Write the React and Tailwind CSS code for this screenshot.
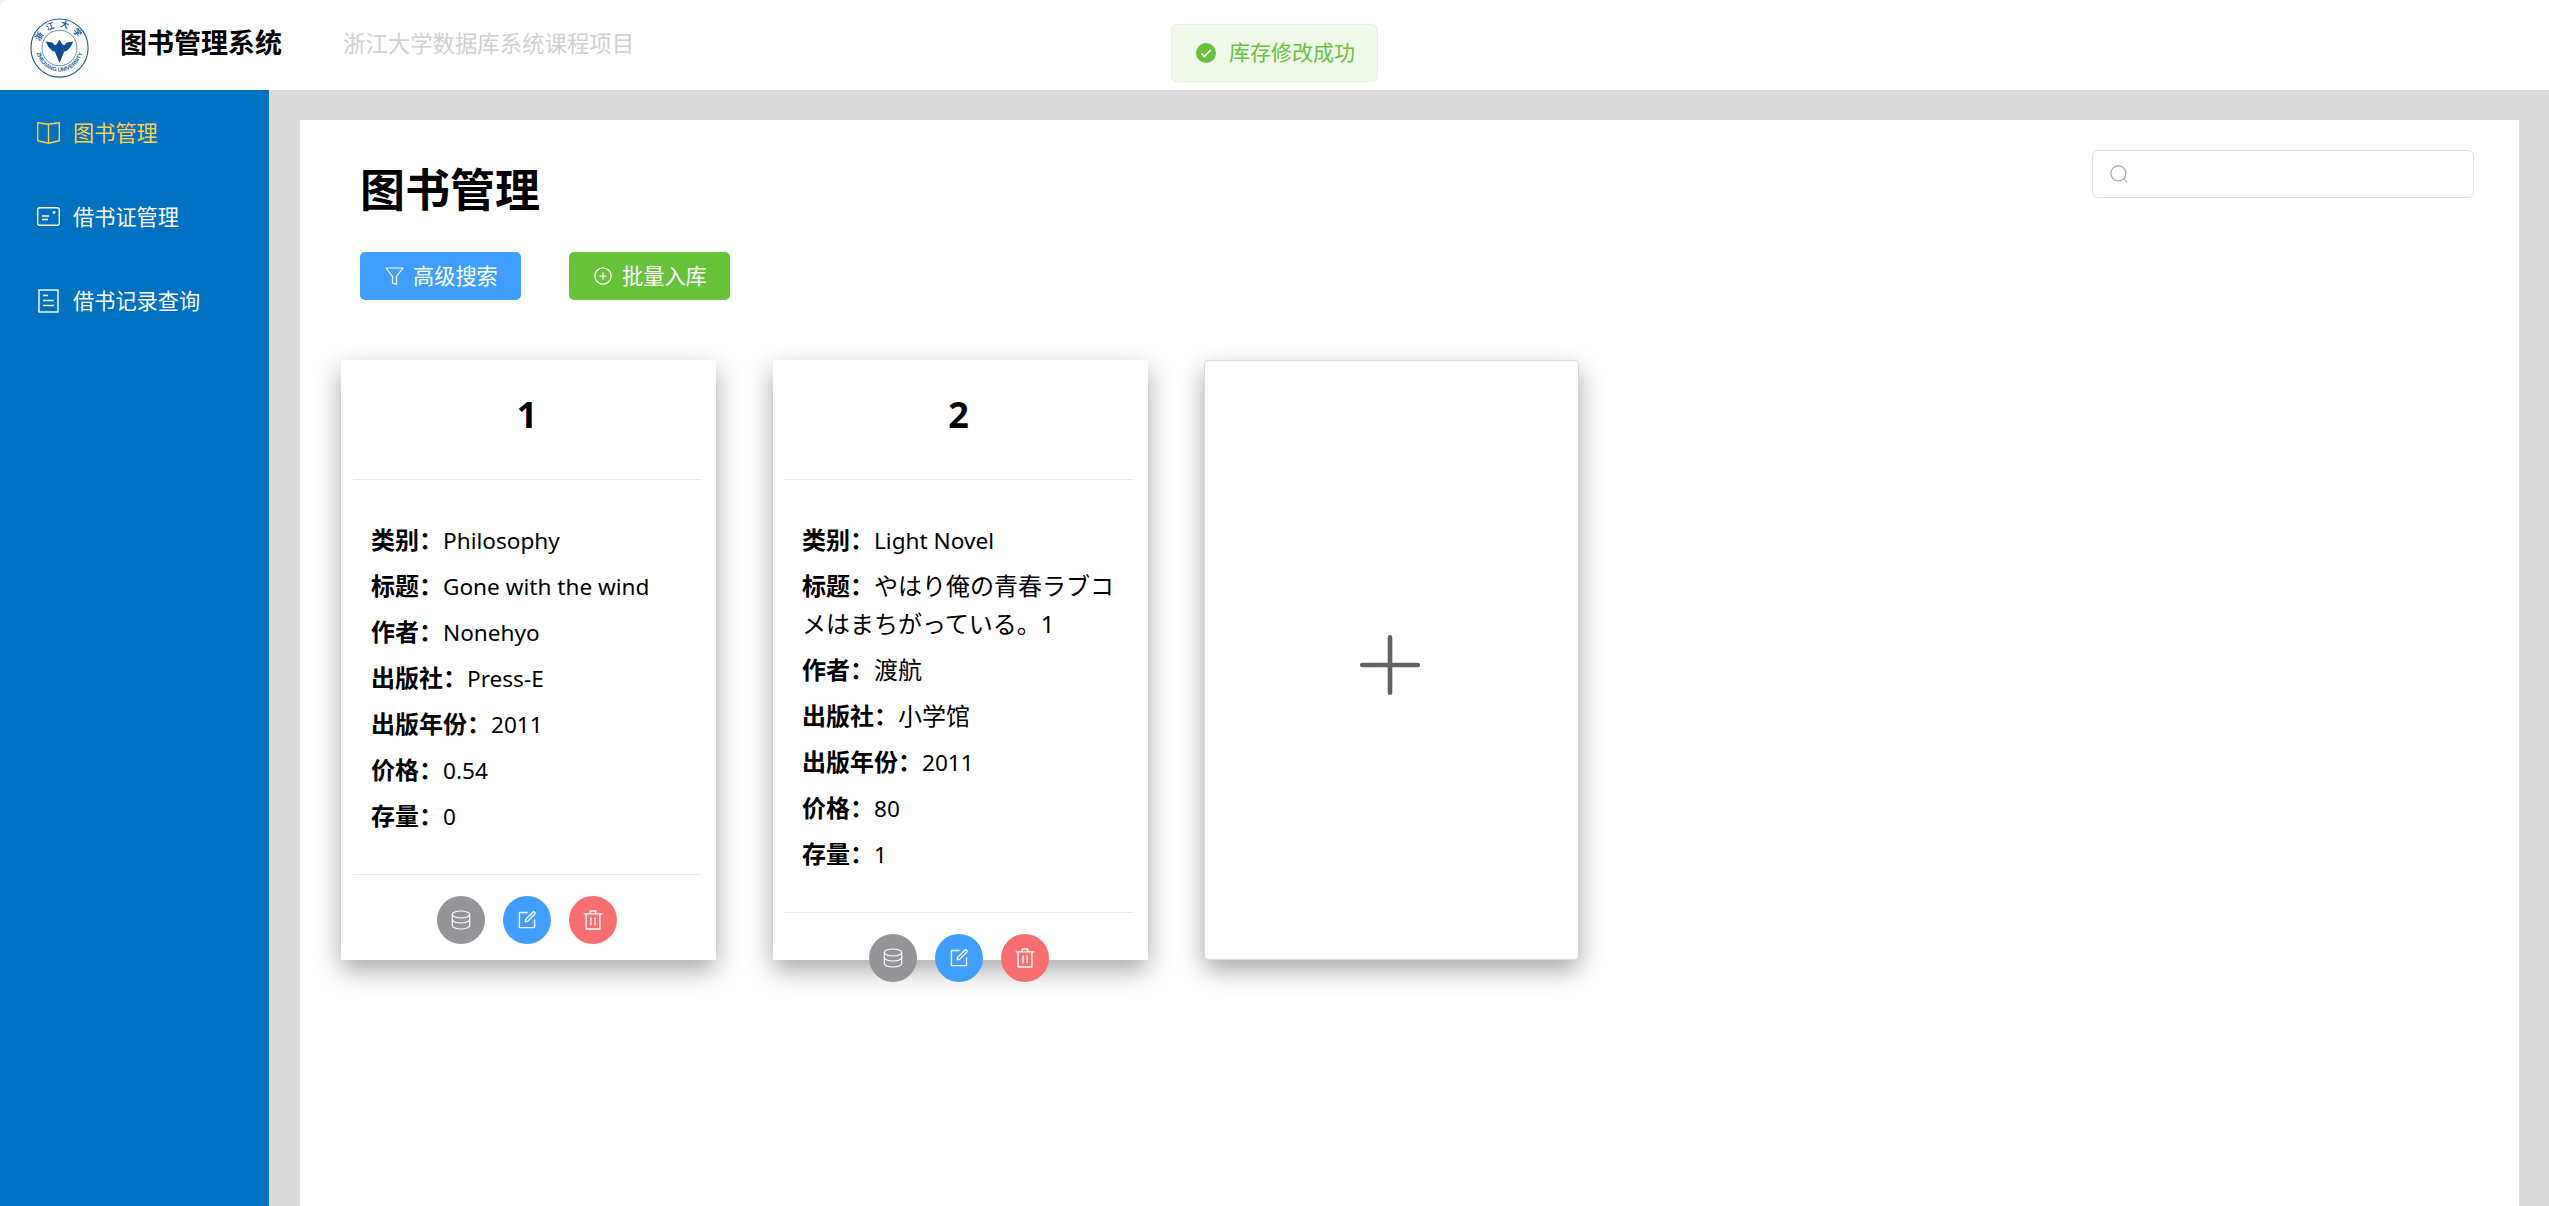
import React from "react";

const sans = "font-['Noto_Sans','Noto_Sans_CJK_SC',sans-serif]";

const Logo = () => (
  <svg viewBox="0 0 64 64" preserveAspectRatio="none" className="w-[59px] h-[60px] mt-[5px]">
    <defs>
      <path id="logoTop" d="M10 32a22 22 0 0 1 44 0" />
      <path id="logoBottom" d="M7 32a25 25 0 0 0 50 0" />
    </defs>
    <circle cx="32" cy="32" r="31" fill="#fff" stroke="#1b5a9c" strokeWidth="1.2" />
    <circle cx="32" cy="32" r="19" fill="none" stroke="#1b5a9c" strokeWidth="0.7" />
    <text fontSize="9" fontWeight="700" fill="#1b5a9c" fontFamily="Noto Sans CJK SC, sans-serif">
      <textPath href="#logoTop" startOffset="50%" textAnchor="middle" letterSpacing="5">浙江大学</textPath>
    </text>
    <text fontSize="6" fontWeight="700" fill="#1b5a9c" fontFamily="Liberation Sans, sans-serif">
      <textPath href="#logoBottom" startOffset="50%" textAnchor="middle">ZHEJIANG UNIVERSITY</textPath>
    </text>
    <path d="M17 25l7 1 3 3 2-1 3-5 3 5 2 1 3-3 7-1-3 6-4 4-3 1-5 12-5-12-3-1-4-4z" fill="#0f4c92" />
  </svg>
);

const BookIcon = () => (
  <svg viewBox="0 0 24 24" className="w-6 h-6" fill="none" stroke="currentColor" strokeWidth="1.4" strokeLinejoin="round">
    <path d="M12.500 3.200 1.700 1.800v18l10.800 2.400 10.800-2.400v-18z" />
    <path d="M12.500 3.200v19" />
  </svg>
);

const CardIcon = () => (
  <svg viewBox="0 0 24 24" className="w-6 h-6" fill="none" stroke="currentColor" strokeWidth="1.4">
    <rect x="1.700" y="2.700" width="21.600" height="17.600" rx="2" />
    <path d="M6 11h7M6 14.500h6" />
    <circle cx="18" cy="7.500" r="1.400" fill="currentColor" stroke="none" />
  </svg>
);

const DocIcon = () => (
  <svg viewBox="0 0 24 24" className="w-6 h-6" fill="none" stroke="currentColor" strokeWidth="1.4">
    <rect x="3" y="1" width="19" height="22" />
    <path d="M7 6.500h5M7 11.500h11M7 16.500h11" />
  </svg>
);

const FilterIcon = () => (
  <svg viewBox="0 0 20 20" className="w-5 h-5" fill="none" stroke="currentColor" strokeWidth="1.200" strokeLinejoin="round">
    <path d="M2 2h17l-6.500 8.500v8l-4 -1.500v-6.500z" />
  </svg>
);

const CirclePlusIcon = () => (
  <svg viewBox="0 0 1024 1024" className="w-5 h-5" fill="currentColor">
    <path d="M352 480h320a32 32 0 1 1 0 64H352a32 32 0 0 1 0-64z" />
    <path d="M480 672V352a32 32 0 1 1 64 0v320a32 32 0 0 1-64 0z" />
    <path d="M512 896a384 384 0 1 0 0-768 384 384 0 0 0 0 768zm0 64a448 448 0 1 1 0-896 448 448 0 0 1 0 896z" />
  </svg>
);

const CoinIcon = () => (
  <svg viewBox="0 0 24 24" className="w-[22px] h-[22px]" fill="none" stroke="currentColor" strokeWidth="1.200">
    <ellipse cx="12" cy="6" rx="9.500" ry="3.800" />
    <path d="M2.500 6v5.500c0 2.100 4.300 3.800 9.500 3.800s9.500-1.700 9.500-3.800V6" />
    <path d="M2.500 11.500v6.500c0 2.100 4.300 3.800 9.500 3.800s9.500-1.700 9.500-3.800v-6.500" />
  </svg>
);

const EditIcon = () => (
  <svg viewBox="0 0 1024 1024" className="w-[22px] h-[22px]" fill="currentColor">
    <path d="M832 512a32 32 0 1 1 64 0v352a32 32 0 0 1-32 32H160a32 32 0 0 1-32-32V160a32 32 0 0 1 32-32h352a32 32 0 0 1 0 64H192v640h640z" />
    <path d="m469.952 554.24 52.8-7.552L847.104 222.4a32 32 0 1 0-45.248-45.248L477.44 501.44l-7.552 52.8zm422.4-422.4a96 96 0 0 1 0 135.808l-331.84 331.84a32 32 0 0 1-18.112 9.088L436.8 623.68a32 32 0 0 1-36.224-36.224l15.104-105.6a32 32 0 0 1 9.024-18.112l331.904-331.84a96 96 0 0 1 135.744 0z" />
  </svg>
);

const DeleteIcon = () => (
  <svg viewBox="0 0 1024 1024" className="w-[22px] h-[22px]" fill="currentColor">
    <path d="M160 256H96a32 32 0 0 1 0-64h256V95.936a32 32 0 0 1 32-32h256a32 32 0 0 1 32 32V192h256a32 32 0 1 1 0 64h-64v672a32 32 0 0 1-32 32H192a32 32 0 0 1-32-32V256zm448-64v-64H416v64h192zM224 896h576V256H224v640zm192-128a32 32 0 0 1-32-32V416a32 32 0 0 1 64 0v320a32 32 0 0 1-32 32zm192 0a32 32 0 0 1-32-32V416a32 32 0 0 1 64 0v320a32 32 0 0 1-32 32z" />
  </svg>
);

const SearchIcon = () => (
  <svg viewBox="0 0 1024 1024" className="w-5 h-5 text-[#a8abb2]" fill="currentColor">
    <path d="m795.904 750.72 124.992 124.928a32 32 0 0 1-45.248 45.248L750.656 795.904a416 416 0 1 1 45.248-45.248zM480 832a352 352 0 1 0 0-704 352 352 0 0 0 0 704z" />
  </svg>
);

const PlusIcon = () => (
  <svg viewBox="0 0 1024 1024" className="w-[74px] h-[74px] text-[#606266]" fill="currentColor">
    <path d="M480 480V128a32 32 0 0 1 64 0v352h352a32 32 0 1 1 0 64H544v352a32 32 0 1 1-64 0V544H128a32 32 0 0 1 0-64h352z" />
  </svg>
);

// latin values run a little smaller, the noto face is wider than the original
const Row = ({ label, value }) => (
  <p className="mb-2 text-[24px] leading-[38px] text-black">
    <span className="font-bold">{label}：</span>
    <span className={/^[\x20-\x7e]+$/.test(value) ? "text-[22.6px] leading-none" : ""}>{value}</span>
  </p>
);

const BookCard = ({ id, rows, inset = "pl-3" }) => (
  <div className={`w-[375px] h-[600px] shrink-0 bg-white shadow-[0_10px_24px_rgba(0,0,0,0.35)] pr-[15px] flex flex-col ${inset}`}>
    <div className="h-[120px] shrink-0 border-b border-[#e4e7ed] flex justify-center pt-[29px]">
      <span className="text-[36px] leading-[52px] font-bold text-black">{id}</span>
    </div>
    <div className="pt-[41px] pb-[31px] pl-[18px] pr-[10px] border-b border-[#e4e7ed]">
      {rows.map((r) => (
        <Row key={r[0]} label={r[0]} value={r[1]} />
      ))}
    </div>
    <div className="flex justify-center gap-[18px] pt-[21px] text-white">
      <button className="w-12 h-12 rounded-full bg-[#939599] flex items-center justify-center"><CoinIcon /></button>
      <button className="w-12 h-12 rounded-full bg-[#409eff] flex items-center justify-center"><EditIcon /></button>
      <button className="w-12 h-12 rounded-full bg-[#f76e6e] flex items-center justify-center"><DeleteIcon /></button>
    </div>
  </div>
);

const NavItem = ({ icon, text, active }) => (
  <div className={`h-[84px] flex items-center gap-[13px] pl-[36px] text-[21.2px] ${active ? "text-[#ffd04b]" : "text-white"}`}>
    {icon}
    <span>{text}</span>
  </div>
);

export default function App() {
  return (
    <div className={`h-screen flex flex-col overflow-hidden bg-[#f3f3f3] ${sans}`}>
      <header className="h-[90px] shrink-0 flex items-center pl-[30px] relative bg-white rounded-tl-lg">
        <Logo />
        <span className="ml-[31px] text-[27px] font-bold text-black -mt-[3px]">图书管理系统</span>
        <span className="ml-[61px] text-[22.4px] text-[#d0d0d0] -mt-[3px]">浙江大学数据库系统课程项目</span>
        <div className="absolute left-[1171px] top-[24px] w-[207px] h-[58px] rounded-md border border-[#e1f3d8] bg-[#f0f9eb] flex items-center pl-[24px] gap-[13px] text-[21px] text-[#67c23a]">
          <svg viewBox="0 0 20 20" className="w-5 h-5">
            <circle cx="10" cy="10" r="10" fill="#67c23a" />
            <path d="M5.500 10.500l3 3 6-6.500" fill="none" stroke="#fff" strokeWidth="1.800" />
          </svg>
          <span>库存修改成功</span>
        </div>
      </header>
      <div className="flex-1 flex min-h-0">
        <aside className="w-[269px] shrink-0 bg-[#0070c0] pt-[1px]">
          <NavItem active icon={<BookIcon />} text="图书管理" />
          <NavItem icon={<CardIcon />} text="借书证管理" />
          <NavItem icon={<DocIcon />} text="借书记录查询" />
        </aside>
        <main className="flex-1 bg-[#dadada] pt-[30px] pl-[31px] pr-[30px]">
          <div className="h-full bg-white">
            <div className="flex justify-between pl-[60px] pr-[45px]">
              <div>
                <h1 className="text-[45px] leading-[64px] font-bold text-black pt-[38px]">图书管理</h1>
                <div className="flex gap-[48px] mt-[30px]">
                  <button className="w-[161px] h-12 rounded-[5px] bg-[#409eff] text-white text-[21.2px] flex items-center pl-[24px] gap-[9px]">
                    <FilterIcon />
                    高级搜索
                  </button>
                  <button className="w-[161px] h-12 rounded-[5px] bg-[#67c23a] text-white text-[21.2px] flex items-center pl-[24px] gap-[9px]">
                    <CirclePlusIcon />
                    批量入库
                  </button>
                </div>
              </div>
              <div className="mt-[30px] w-[382px] h-12 rounded-md border border-[#dcdfe6] flex items-center pl-[16px] self-start">
                <SearchIcon />
              </div>
            </div>
            <div className="flex gap-[57px] ml-[41px] mt-[60px]">
              <BookCard
                id="1"
                rows={[
                  ["类别", "Philosophy"],
                  ["标题", "Gone with the wind"],
                  ["作者", "Nonehyo"],
                  ["出版社", "Press-E"],
                  ["出版年份", "2011"],
                  ["价格", "0.54"],
                  ["存量", "0"],
                ]}
              />
              <BookCard
                id="2"
                inset="pl-[11px]"
                rows={[
                  ["类别", "Light Novel"],
                  ["标题", "やはり俺の青春ラブコメはまちがっている。1"],
                  ["作者", "渡航"],
                  ["出版社", "小学馆"],
                  ["出版年份", "2011"],
                  ["价格", "80"],
                  ["存量", "1"],
                ]}
              />
              <div className="w-[375px] -ml-px h-[600px] shrink-0 bg-white rounded border border-[#d8d9e0] shadow-[0_10px_24px_rgba(0,0,0,0.35)] flex items-center justify-center pt-[10px] pr-[4px]">
                <PlusIcon />
              </div>
            </div>
          </div>
        </main>
      </div>
    </div>
  );
}
